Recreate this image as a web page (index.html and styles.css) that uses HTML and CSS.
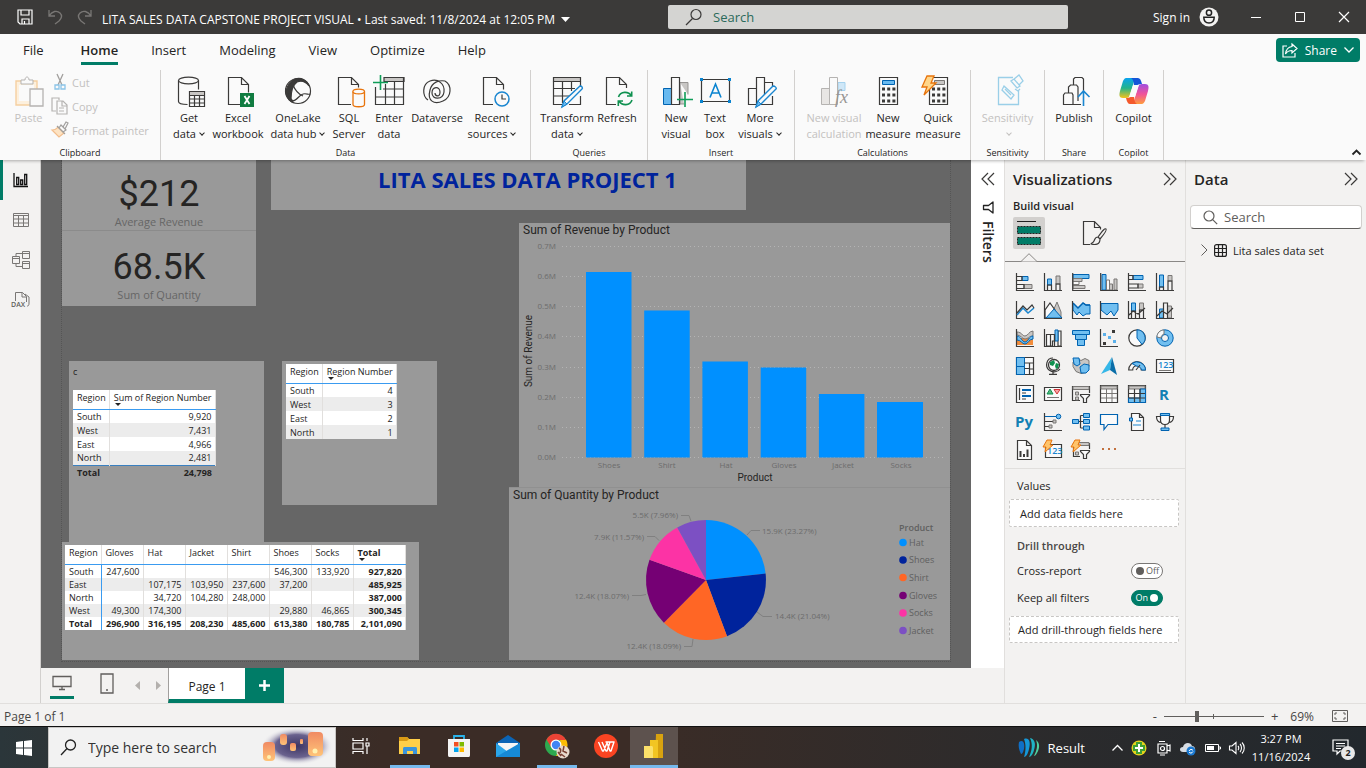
FILE: index.html
```html
<!DOCTYPE html>
<html lang="en">
<head>
<meta charset="utf-8">
<title>LITA SALES DATA CAPSTONE PROJECT VISUAL</title>
<link rel="stylesheet" href="styles.css">
</head>
<body>
<header class="titlebar">
  <div class="title-left">
    <button class="bare" aria-label="Save"><svg width="16" height="16" viewBox="0 0 16 16" fill="none" stroke="#fff" stroke-width="1.2"><path d="M1 1h14v14H3l-2-2zM4 1v5h8V1M5 15v-5h7v5M7.500 12v3"/></svg></button>
    <button class="bare" aria-label="Undo"><svg width="16" height="16" viewBox="0 0 16 16" fill="none" stroke="#797775" stroke-width="1.3"><path d="M2 1v6h6M2 7c3-5 8-6 11-3s1 6-1 8l-4 3"/></svg></button>
    <button class="bare" aria-label="Redo"><svg width="16" height="16" viewBox="0 0 16 16" fill="none" stroke="#797775" stroke-width="1.3"><path d="M14 1v6H8M14 7C11 2 6 1 3 4s-1 6 1 8l4 3"/></svg></button>
    <button class="doc-title">LITA SALES DATA CAPSTONE PROJECT VISUAL • Last saved: 11/8/2024 at 12:05 PM <svg width="9" height="5" viewBox="0 0 9 5"><path d="M0 0h9L4.500 5z" fill="#fff"/></svg></button>
  </div>
  <label class="title-search"><svg width="18" height="18" viewBox="0 0 18 18" fill="none" stroke="#3b3a39" stroke-width="1.2"><circle cx="11" cy="6.500" r="5"/><path d="M7.500 10.500L1 17"/></svg><input type="search" placeholder="Search" aria-label="Search"></label>
  <div class="title-right">
    <button class="signin">Sign in <svg width="20" height="20" viewBox="0 0 20 20"><circle cx="10" cy="10" r="9.500" fill="#f3f2f1"/><g fill="none" stroke="#222" stroke-width="1.500"><circle cx="10" cy="5.700" r="2.600"/><path d="M4.800 10.300h10.400c0 3.800-2 5.700-5.200 5.700s-5.200-1.900-5.200-5.700z"/></g></svg></button>
    <button class="win" aria-label="Minimize"><svg width="10" height="10"><path d="M0 5.500h10" stroke="#fff"/></svg></button>
    <button class="win" aria-label="Maximize"><svg width="10" height="10"><path d="M.5.5h9v9h-9z" fill="none" stroke="#fff"/></svg></button>
    <button class="win" aria-label="Close"><svg width="12" height="12"><path d="M1 1l10 10M11 1L1 11" stroke="#fff" stroke-width="1.200"/></svg></button>
  </div>
</header>

<nav class="tabs">
  <button class="tab file">File</button><button class="tab active">Home</button><button class="tab">Insert</button><button class="tab">Modeling</button><button class="tab">View</button><button class="tab">Optimize</button><button class="tab">Help</button>
  <button class="share"><svg width="16" height="15" viewBox="0 0 16 15" fill="none" stroke="#fff" stroke-width="1.200"><path d="M5 3H1v11h12v-4"/><path d="M10 1l5 4.500L10 10V7.500C7 7.500 5 8.500 3.500 11 4 6.500 6 4 10 3.500z"/></svg>Share<svg width="10" height="6" viewBox="0 0 10 6" fill="none" stroke="#fff" stroke-width="1.300"><path d="M.5.5L5 5 9.500.5"/></svg></button>
</nav>

<section class="ribbon">
  <div class="group clip">
    <div class="tools disabled">
      <button class="tool"><svg class="ic" viewBox="0 0 32 32" fill="none"><path d="M3 5h21v24H3z" fill="#fdf0dd" stroke="#f5cfa0" stroke-width="1.400"/><path d="M6 9h15v16H6z" fill="#fafafa"/><path d="M8 8V4h4c0-4 4-4 4 0h4v4z" fill="#fafafa" stroke="#b5b3b1"/><path d="M17 13h13v17H17z" fill="#fafafa" stroke="#b5b3b1" stroke-width="1.300"/></svg><span>Paste</span></button>
      <div class="stack">
        <button class="mini"><svg width="18" height="18" viewBox="0 0 18 18" fill="none"><path d="M6 1l5 11M12 1L7 12" stroke="#a19f9d" stroke-width="1.300"/><path d="M4 12h4v4H4zM10 12h4v4h-4z" stroke="#8bc4e8" stroke-width="1.300"/></svg>Cut</button>
        <button class="mini"><svg width="18" height="18" viewBox="0 0 18 18" fill="none" stroke="#b5b3b1" stroke-width="1.200"><path d="M5 14H1V1h7v2M6 4h6l4 4v9H6zM11 4v5h5M8 11h5M8 14h5"/></svg>Copy</button>
        <button class="mini"><svg width="18" height="18" viewBox="0 0 18 18" fill="none" stroke-width="1.200"><path d="M1 9c4 0 5-2 6-3l6 6-5 4z" fill="#fde3c3" stroke="#f2bd8c"/><path d="M6 5l8 8M8 7l2-3 5 5-3 2M12 6l3-5 2 1-3 6" stroke="#a19f9d"/></svg>Format painter</button>
      </div>
    </div>
    <div class="gname">Clipboard</div>
  </div>
  <div class="group data">
    <div class="tools">
      <button class="tool"><svg class="ic k" viewBox="0 0 32 32"><ellipse cx="15.500" cy="4.500" rx="10" ry="3.300"/><path d="M5.500 4.500v21c0 2 4 3 9 3M25.500 4.500v9"/><path d="M16.500 15.500h15v15h-15z" class="w"/><path d="M17 16h14v3H17z" fill="#c8c6c4" stroke="none"/><path d="M16.500 19.500h15M16.500 23h15M16.500 27h15M21.500 19v11M26.500 19v11"/></svg><span>Get<br>data<i class="cv"></i></span></button>
      <button class="tool"><svg class="ic" viewBox="0 0 32 32"><path class="k" d="M18 28.500H6.500v-27h13l7 7v8M19.500 1.500v7h7"/><path d="M18 17h14v14H18z" fill="#107c41"/><path d="M22.500 20l5 8M27.500 20l-5 8" stroke="#fff" stroke-width="1.800"/></svg><span>Excel<br>workbook</span></button>
      <button class="tool"><svg class="ic k" viewBox="0 0 32 32"><circle cx="16" cy="15" r="12.500"/><path d="M13 3c-4 2-8 6-8 11 0 4 1 7 4 9 0-8 2-14 6-17 5-2 9 0 12 4-2-6-8-9-14-7z" fill="#3b3a39"/><path d="M4 12c-1 5 1 11 6 14 2-1 0-2-1-3-3-3-4-6-5-11z" fill="#3b3a39"/><path d="M11 9c2 5 5 9 10 11M10 25c5 0 7-6 11-7 3-1 6 1 7 0"/></svg><span>OneLake<br>data hub<i class="cv"></i></span></button>
      <button class="tool"><svg class="ic" viewBox="0 0 32 32"><path class="k" d="M18 28.500H5.500v-27h13l7 7v3M18.500 1.500v7h7"/><g fill="#fafafa" stroke="#e8740c" stroke-width="1.300"><path d="M20 15.500v13c0 3 11.500 3 11.500 0v-13"/><ellipse cx="25.700" cy="15.500" rx="5.800" ry="2.400"/></g></svg><span>SQL<br>Server</span></button>
      <button class="tool"><svg class="ic k" viewBox="0 0 32 32"><path d="M11 1.500h20v4H11z" fill="#c8c6c4"/><path d="M2.500 11v17.500h28V1.500M11 1.500h20M12 5.500h19M10 13h21M2.500 21h28M12.500 8v20M21.500 6v22"/><path d="M7.500-1v15M0 6.500h15" stroke="#0f9d58" stroke-width="1.600"/></svg><span>Enter<br>data</span></button>
      <button class="tool"><svg class="ic k" viewBox="0 0 32 32"><path d="M7 24C1 20 1 8 9 5s15 3 14 11-12 8-12 1 8-7 8-1-5 4-5 1"/><path d="M24 5c7 4 7 16-2 20S6 25 9 14C11 6 18 4 24 5"/></svg><span>Dataverse</span></button>
      <button class="tool"><svg class="ic" viewBox="0 0 32 32"><path class="k" d="M17 28.500H7.500v-27h13l7 7v5M20.500 1.500v7h7"/><circle cx="26" cy="23" r="7" fill="#fafafa" stroke="#1a86d0" stroke-width="1.500"/><path class="k" d="M26 18.500V23h4"/></svg><span>Recent<br>sources<i class="cv"></i></span></button>
    </div>
    <div class="gname">Data</div>
  </div>
  <div class="group queries">
    <div class="tools">
      <button class="tool"><svg class="ic" viewBox="0 0 32 32"><g class="k"><path d="M2.500 1.500h27v4h-27z" fill="#c8c6c4"/><path d="M2.500 5.500v23H11M29.500 5.500V10M29.500 20v8.500H18M2.500 12.500H24M2.500 20H18M11.500 6v21M20.500 6v9"/></g><path d="M29 10c2 0 3 2 2 3L16 28l-5 3 2-6z" fill="#fafafa" stroke="#1a86d0" stroke-width="1.400"/><path d="M13 25l3 3-5 3z" fill="#69baf0" stroke="#1a86d0"/></svg><span>Transform<br>data<i class="cv"></i></span></button>
      <button class="tool"><svg class="ic" viewBox="0 0 32 32"><path class="k" d="M15 28.500H5.500v-27h13l7 7V12M18.500 1.500v7h7"/><path d="M17.500 21c2-6 10-6 13-1M30.700 15.500V20H26M31 24c-2 6-10 6-13 1M17.300 30v-5H22" fill="none" stroke="#0f9150" stroke-width="1.600"/></svg><span>Refresh</span></button>
    </div>
    <div class="gname">Queries</div>
  </div>
  <div class="group insert">
    <div class="tools">
      <button class="tool"><svg class="ic" viewBox="0 0 32 32"><path d="M20 6.500h8v12M20 6.500V28h4" fill="#c8c6c4" stroke="#979593"/><path d="M3.500 12.500h8v16h-8z" fill="#69baf0" stroke="#0063b1"/><path class="k w" d="M11.500 1.500h8v27h-8z"/><path d="M25 16v15M17 23.500h16" stroke="#0f9d58" stroke-width="1.600"/></svg><span>New<br>visual</span></button>
      <button class="tool"><svg class="ic" viewBox="0 0 32 32"><path class="k" d="M2.500 3.500h28v22h-28z"/><g fill="#0a84d0"><path d="M1 2h3v3H1zM29 2h3v3h-3zM1 24h3v3H1zM29 24h3v3h-3z"/></g><path d="M11 21.500L16.500 8 22 21.500M13 17h7" fill="none" stroke="#0a84d0" stroke-width="1.600"/></svg><span>Text<br>box</span></button>
      <button class="tool"><svg class="ic" viewBox="0 0 32 32"><path class="k" d="M12 28.500H4.500v-16h8M12.500 28V1.500h8V20M20.500 6.500h8V10M28.500 20v8.500H17"/><path d="M29 10c2 0 4 2 3 3L17 28l-5 3 2-6z" fill="#fafafa" stroke="#1a86d0" stroke-width="1.400"/><path d="M14 25l3 3-5 3z" fill="#69baf0" stroke="#1a86d0"/></svg><span>More<br>visuals<i class="cv"></i></span></button>
    </div>
    <div class="gname">Insert</div>
  </div>
  <div class="group calc">
    <div class="tools">
      <button class="tool off"><svg class="ic" viewBox="0 0 32 32" fill="#fafafa" stroke="#b5b3b1"><path d="M3.500 12.500h8v16h-8z" fill="#e8e6e4"/><path d="M20 6.500h7v8h-7z" fill="#cfe7f7" stroke="#a5d2ee"/><path d="M11.500 1.500h8v27h-8z"/><text x="17" y="27" class="fx">fx</text></svg><span>New visual<br>calculation</span></button>
      <button class="tool"><svg class="ic" viewBox="0 0 32 32"><path class="k w" d="M7.500 1.500h18v27h-18z"/><path d="M10.500 4.500h12v4h-12z" fill="#69baf0" stroke="#0063b1"/><path d="M10 13h14M10 19h14M10 25h14" stroke="#3b3a39" stroke-width="3" stroke-dasharray="3 2.200"/></svg><span>New<br>measure</span></button>
      <button class="tool"><svg class="ic" viewBox="0 0 32 32"><path class="k w" d="M7.500 1.500h18v27h-18z"/><path d="M12.500 4.500h10v4h-10z" fill="#c8c6c4" stroke="#797775"/><path d="M10 13h14M10 19h14M10 25h14" stroke="#3b3a39" stroke-width="3" stroke-dasharray="3 2.200"/><path d="M5 0h7L9 7h5L2 19l3-8H0z" fill="#ffd68a" stroke="#e8740c" stroke-width="1.300"/></svg><span>Quick<br>measure</span></button>
    </div>
    <div class="gname">Calculations</div>
  </div>
  <div class="group one sens">
    <div class="tools"><button class="tool off"><svg class="ic" viewBox="0 0 32 32" fill="none" stroke="#9acfe8" stroke-width="1.300"><path d="M21 1.500H6.500v27h20V15"/><path d="M12 10l10 9-3 4-9-9zM13 13l6 6M19 5l6 7 3-2-6-7zM22 3l5-4 4 6-4 4M23 13l3 2 2-2"/></svg><span>Sensitivity<br><i class="cv"></i></span></button></div>
    <div class="gname">Sensitivity</div>
  </div>
  <div class="group one shr">
    <div class="tools"><button class="tool"><svg class="ic k" viewBox="0 0 32 32"><path d="M23 28.500H5.500V19l1.500-2h7l1 2v9.500M10.500 17v-6l2-2h6l1.500 2v14M15.500 9V3L17 1.500h7L25.500 3v12"/><path d="M25.500 30V15M20 21l5.500-6 6 6" stroke="#1a86d0" stroke-width="1.600"/></svg><span>Publish</span></button></div>
    <div class="gname">Share</div>
  </div>
  <div class="group one cop">
    <div class="tools"><button class="tool"><svg class="ic" viewBox="0 0 32 32"><defs><linearGradient id="ca" x1="0" y1="0" x2="0" y2="1"><stop offset="0" stop-color="#0aa2ef"/><stop offset=".5" stop-color="#22b48c"/><stop offset="1" stop-color="#f5c21a"/></linearGradient><linearGradient id="cb" x1="0" y1="1" x2="0" y2="0"><stop offset="0" stop-color="#ff9d3c"/><stop offset=".5" stop-color="#f0529a"/><stop offset="1" stop-color="#a04fe0"/></linearGradient></defs><path d="M8 2h12c-3 1-4 3-5 7l-3 10c-1 3-3 3-5 3H5c-4 0-4-3-3-7L5 5c1-2 2-3 3-3z" fill="url(#ca)"/><path d="M24 28H12c3-1 4-3 5-7l3-10c1-3 3-3 5-3h2c4 0 4 3 3 7l-3 10c-1 2-2 3-3 3z" fill="url(#cb)"/><path d="M13 2h7c2 0 3 2 4 6-4 0-5 1-6 3l-2 1c0-4 0-8-3-10z" fill="#1456d8"/><path d="M19 28h-7c-2 0-3-2-4-6 4 0 5-1 6-3l2-1c0 4 0 8 3 10z" fill="#f4592c"/><path d="M15 9h6l-4 12h-6z" fill="#fafafa"/></svg><span>Copilot</span></button></div>
    <div class="gname">Copilot</div>
  </div>
  <button class="bare collapse" aria-label="Collapse ribbon"><svg width="9" height="6" viewBox="0 0 9 6" fill="none" stroke="#222" stroke-width="1.800"><path d="M.5 5.500L4.500 1.500l4 4"/></svg></button>
</section>

<main class="work">
  <nav class="rail">
    <button class="rbtn on" aria-label="Report view"><svg width="18" height="18" viewBox="0 0 18 18" fill="none" stroke="#111" stroke-width="1.300"><path d="M2 2v13.500h14M4.700 6.500h2v7h-2zM8.700 9h2v4.500h-2zM12.700 3.500h2v10h-2z"/></svg></button>
    <button class="rbtn" aria-label="Table view"><svg width="18" height="18" viewBox="0 0 18 18" fill="none" stroke="#797775"><path d="M1.500 2.500h15v13h-15zM1.500 4.500h15M1.500 8h15M1.500 12h15M6.500 4.500v11M11.500 4.500v11"/></svg></button>
    <button class="rbtn" aria-label="Model view"><svg width="20" height="20" viewBox="0 0 20 20" fill="none" stroke="#797775"><path d="M1.500 6.500h7v7h-7zM1.500 8.500h7M11.500 1.500h7v7h-7zM11.500 3.500h7M11.500 11.500h7v7h-7zM11.500 13.500h7M5 6.500V3.500h6M5 13.500v3h6"/></svg></button>
    <button class="rbtn" aria-label="DAX query view"><svg width="20" height="20" viewBox="0 0 20 20" fill="none" stroke="#797775"><path d="M4.500 11V2.500h7l4 4V12M11 2.500V7h4.500M14 4l4 3v6c0 3-1 3-2 3"/><text x="0" y="17" class="dax">DAX</text></svg></button>
  </nav>

  <div class="center">
    <div class="stage">
      <section class="canvas">
        <div class="page">
          <article class="visual kpis">
            <div class="kpi"><strong>$212</strong><span>Average Revenue</span></div>
            <div class="kpi"><strong>68.5K</strong><span>Sum of Quantity</span></div>
          </article>
          <article class="visual banner"><h1>LITA SALES DATA PROJECT 1</h1></article>
          <article class="visual t1">
            <p>c</p>
            <table class="grid">
              <thead><tr><th>Region</th><th class="sorted">Sum of Region Number</th></tr></thead>
              <tbody><tr><td>South</td><td>9,920</td></tr><tr><td>West</td><td>7,431</td></tr><tr><td>East</td><td>4,966</td></tr><tr><td>North</td><td>2,481</td></tr></tbody>
              <tfoot><tr><td>Total</td><td>24,798</td></tr></tfoot>
            </table>
          </article>
          <article class="visual t2">
            <table class="grid">
              <thead><tr><th>Region</th><th class="sorted">Region Number</th></tr></thead>
              <tbody><tr><td>South</td><td>4</td></tr><tr><td>West</td><td>3</td></tr><tr><td>East</td><td>2</td></tr><tr><td>North</td><td>1</td></tr></tbody>
            </table>
          </article>
          <article class="visual t3">
            <table class="grid matrix">
              <colgroup><col class="c0"><col span="6" class="c1"><col></colgroup>
              <thead><tr><th>Region</th><th>Gloves</th><th>Hat</th><th>Jacket</th><th>Shirt</th><th>Shoes</th><th>Socks</th><th class="sorted">Total</th></tr></thead>
              <tbody>
              <tr><td>South</td><td>247,600</td><td></td><td></td><td></td><td>546,300</td><td>133,920</td><td>927,820</td></tr>
              <tr><td>East</td><td></td><td>107,175</td><td>103,950</td><td>237,600</td><td>37,200</td><td></td><td>485,925</td></tr>
              <tr><td>North</td><td></td><td>34,720</td><td>104,280</td><td>248,000</td><td></td><td></td><td>387,000</td></tr>
              <tr><td>West</td><td>49,300</td><td>174,300</td><td></td><td></td><td>29,880</td><td>46,865</td><td>300,345</td></tr>
              <tr class="sum"><td>Total</td><td>296,900</td><td>316,195</td><td>208,230</td><td>485,600</td><td>613,380</td><td>180,785</td><td>2,101,090</td></tr>
              </tbody>
            </table>
          </article>
          <article class="visual bars">
            <h2>Sum of Revenue by Product</h2>
            <svg viewBox="0 0 431 248" width="431" height="248">
              <path d="M43 7.500h384M43 37.500h384M43 67.500h384M43 97.500h384M43 128.500h384M43 158.500h384M43 188.500h384M43 218.500h384" stroke="#b4b4b4" stroke-dasharray="1 3"/>
              <g fill="#0090ff"><path d="M67 33h45.500v185.500H67zM125.200 71.500h45.500v147h-45.500zM183.400 122.500h45.500v96h-45.500zM241.700 128.500h45.500v90h-45.500zM299.900 155h45.500v63.500h-45.500zM358 163h46v55.500h-46z"/></g>
              <g class="ax" text-anchor="end"><text x="37" y="10">0.7M</text><text x="37" y="40">0.6M</text><text x="37" y="70">0.5M</text><text x="37" y="100">0.4M</text><text x="37" y="131">0.3M</text><text x="37" y="161">0.2M</text><text x="37" y="191">0.1M</text><text x="37" y="221">0.0M</text></g>
              <g class="ax" text-anchor="middle"><text x="90" y="229">Shoes</text><text x="148" y="229">Shirt</text><text x="207" y="229">Hat</text><text x="265" y="229">Gloves</text><text x="324" y="229">Jacket</text><text x="382" y="229">Socks</text></g>
              <g class="axt" text-anchor="middle"><text x="236" y="242">Product</text><text transform="rotate(-90 13 112)" x="13" y="112">Sum of Revenue</text></g>
            </svg>
          </article>
          <article class="visual pie">
            <h2>Sum of Quantity by Product</h2>
            <svg viewBox="0 0 441 157" width="441" height="157">
              <path d="M197 77V17A60 60 0 0 1 256.600 70.500z" fill="#0090ff"/>
              <path d="M197 77L256.600 70.500A60 60 0 0 1 218 133.200z" fill="#00239c"/>
              <path d="M197 77L218 133.200A60 60 0 0 1 154.900 119.700z" fill="#ff6625"/>
              <path d="M197 77L154.900 119.700A60 60 0 0 1 140.500 56.800z" fill="#750074"/>
              <path d="M197 77L140.500 56.800A60 60 0 0 1 168.200 24.400z" fill="#fc33a5"/>
              <path d="M197 77L168.200 24.400A60 60 0 0 1 197 17z" fill="#7c50c3"/>
              <path d="M238 32l4-4.500h9M248 109l6 4.500h9M184 136l-1 7.500h-8M123 92.500h9l5-1M138 33.500h8l4 4M172 12.500h8l2 5.500" fill="none" stroke="#808080"/>
              <g class="ax"><text x="253" y="31">15.9K (23.27%)</text><text x="266" y="116">14.4K (21.04%)</text></g>
              <g class="ax" text-anchor="end"><text x="172" y="146">12.4K (18.09%)</text><text x="120" y="96">12.4K (18.07%)</text><text x="135" y="37">7.9K (11.57%)</text><text x="169" y="15">5.5K (7.96%)</text></g>
              <g class="leg"><text x="390" y="28" class="lt">Product</text><text x="400" y="43">Hat</text><text x="400" y="60">Shoes</text><text x="400" y="78">Shirt</text><text x="400" y="96">Gloves</text><text x="400" y="113">Socks</text><text x="400" y="131">Jacket</text></g>
              <circle cx="394" cy="39.500" r="3.800" fill="#0090ff"/><circle cx="394" cy="57" r="3.800" fill="#00239c"/><circle cx="394" cy="74.500" r="3.800" fill="#ff6625"/><circle cx="394" cy="92.500" r="3.800" fill="#750074"/><circle cx="394" cy="110" r="3.800" fill="#fc33a5"/><circle cx="394" cy="127.500" r="3.800" fill="#7c50c3"/>
            </svg>
          </article>
        </div>
      </section>
      <aside class="filters">
        <button class="bare" aria-label="Expand filters"><svg width="14" height="14" viewBox="0 0 14 14" fill="none" stroke="#3b3a39" stroke-width="1.200"><path d="M7 1L1 7l6 6M13 1L7 7l6 6"/></svg></button>
        <svg width="12" height="14" viewBox="0 0 12 14" fill="none" stroke="#222" stroke-width="1.300" stroke-linejoin="round"><path d="M11 1v11L6.500 8.500H1.500v-4h5z"/></svg>
        <h2>Filters</h2>
      </aside>
    </div>
    <div class="pagebar">
      <button class="device on" aria-label="Desktop layout"><svg width="20" height="17" viewBox="0 0 20 17" fill="none" stroke="#605e5c" stroke-width="1.300"><path d="M1 1.500h18v10H1zM7 14.500h6M10 12v2"/></svg></button>
      <button class="device" aria-label="Mobile layout"><svg width="14" height="21" viewBox="0 0 14 21" fill="none" stroke="#605e5c" stroke-width="1.300"><path d="M1 1h12v19H1zM6 17h2"/></svg></button>
      <button class="bare arrow" aria-label="Previous page"><svg width="5" height="9"><path d="M5 0v9L0 4.500z" fill="#b3b0ad"/></svg></button>
      <button class="bare arrow" aria-label="Next page"><svg width="5" height="9"><path d="M0 0v9l5-4.500z" fill="#b3b0ad"/></svg></button>
      <button class="ptab">Page 1</button>
      <button class="plus" aria-label="New page"><svg width="11" height="11"><path d="M5.500 0v11M0 5.500h11" stroke="#fff" stroke-width="2.500"/></svg></button>
    </div>
  </div>

  <aside class="viz">
    <div class="phead"><h2>Visualizations</h2><button class="bare" aria-label="Collapse"><svg width="14" height="14" viewBox="0 0 14 14" fill="none" stroke="#3b3a39" stroke-width="1.200"><path d="M1 1l6 6-6 6M7 1l6 6-6 6"/></svg></button></div>
    <h3>Build visual</h3>
    <div class="modes">
      <button class="mode on" aria-label="Build visual"><svg width="26" height="26" viewBox="0 0 26 26"><path d="M1 1.500h19" stroke="#222"/><path d="M1.500 6.500h23v7h-23zM1.500 17.500h23v7h-23z" fill="#007c67" stroke="#222" stroke-dasharray="2 1"/></svg></button>
      <button class="mode" aria-label="Format visual"><svg width="26" height="26" viewBox="0 0 26 26" fill="none" stroke="#3b3a39" stroke-width="1.200"><path d="M8 24.500H1.500v-23h11l6 6v2M12.500 1.500v6h6"/><path d="M24 9c1 1 0 3-6 10l-2-2c5-7 7-9 8-8zM16 17c-3 0-3 2-4 4-1 2-3 2-3 3 4 1 9 1 9-5z"/></svg></button>
    </div>
    <svg class="caret" width="18" height="9" viewBox="0 0 18 9"><path d="M0 8.500h1L9 .7l8 7.800h1" fill="#f3f2f1" stroke="#8a8886"/></svg>
    <div class="gallery">
      <svg viewBox="0 0 18 18"><path class="b" d="M6 3.500h6v4H6z"/><path class="g" d="M8 11.500h8v4H8z"/><path class="k" d="M.5 0v17.500H18M1 3.500h5v4H1M1 11.500h7v4H1"/></svg>
      <svg viewBox="0 0 18 18"><path class="b" d="M3.500 6h4v6h-4z"/><path class="g" d="M12 3h4v8h-4z"/><path class="k" d="M.5 0v17.500H18M3.500 17v-5h4v5M12 17v-6h4v6"/></svg>
      <svg viewBox="0 0 18 18"><path class="b" d="M1 1.500h16v4H1z"/><path class="g" d="M1 5.500h9v3H1zM1 12.500h12v3H1z"/><path class="g w2" d="M1 8.500h6v3H1z"/><path class="k" d="M.7 0v17.500H18"/></svg>
      <svg viewBox="0 0 18 18"><path class="b" d="M2 1.500h4V17H2z"/><path class="g w2" d="M6.500 7h3v10h-3z"/><path class="g" d="M9.500 11h3v6h-3zM14 6h3v11h-3z"/><path class="k" d="M.7 0v17.500H18"/></svg>
      <svg viewBox="0 0 18 18"><path class="b" d="M5 2.500h10v4H5z"/><path class="g" d="M10 11h5v4h-5z"/><path class="k" d="M.5 0v17.500H18M1 2.500h4v4H1M1 11h9v4H1"/></svg>
      <svg viewBox="0 0 18 18"><path class="b" d="M3.500 2h4v12h-4z"/><path class="g" d="M12 2.500h4V8h-4z"/><path class="k" d="M.5 0v17.500H18M3.500 17v-3h4v3M12 17V8h4v9"/></svg>

      <svg viewBox="0 0 18 18"><path class="k" d="M.5 0v17.500H18"/><path d="M1 14l6-7 5 5 6-5" fill="none" stroke="#1a86d0" stroke-width="1.500"/><path class="k" d="M1 12l6-7 4 4 5-5 2 3"/></svg>
      <svg viewBox="0 0 18 18"><path class="g" d="M6 17l7-16 4 10v6z"/><path class="k w" d="M1 17V9l5-7 5 7-5 8z"/><path class="b" d="M2 17l8-9 8 9z"/><path class="k" d="M.5 0v17.500H18"/></svg>
      <svg viewBox="0 0 18 18"><path class="b" d="M1 2l5 5 5-5 3 2h4v9h-4l-3 2-4-4-2 3-4-5z"/><path d="M1 2l5 5 5-5 3 2h4" fill="none" stroke="#0063b1" stroke-width="1.500"/><path class="k" d="M.5 0v17.500H18"/></svg>
      <svg viewBox="0 0 18 18"><path class="b" d="M1 2.500h17V9l-4 6-3-5-4 4-6-5z"/><path class="k" d="M.5 0v17.500H18"/></svg>
      <svg viewBox="0 0 18 18"><path class="b" d="M3.500 2h4v8h-4z"/><path class="g" d="M11.500 2h4v7h-4z"/><path class="k" d="M.5 0v17.500H18M3.500 17v-7h4v7M11.500 17V9h4v8M1 14l4-4 5 3 7-6"/></svg>
      <svg viewBox="0 0 18 18"><path class="b" d="M3.500 8h4v9h-4z"/><path class="g" d="M11.500 5h4v12h-4z"/><path class="k" d="M.5 0v17.500H18M7.500 17V2h4v15M1 15l5-5 5 3 6-6"/></svg>

      <svg viewBox="0 0 18 18"><path d="M1 9h16v7H1z" fill="#f28c3a"/><path class="g" d="M1 3c5 0 5 4 8 4s4-5 8-5v5c-4 0-5 3-8 3s-4-4-8-4z"/><path class="b" d="M1 7c4 0 5 6 8 6s4-6 8-6v3c-4 0-5 5-8 5s-4-4-8-4z"/><path class="k" d="M.5 0v17.500H18"/></svg>
      <svg viewBox="0 0 18 18"><path class="k w" d="M2.500 5.500h4V17h-4zM6.500 5.500h4V12h-2v5h-2zM14 2h3v15h-3z"/><path class="b" d="M11 1h3v11h-3z"/><path class="k" d="M.5 0v17.500H18M10.500 5v12"/></svg>
      <svg viewBox="0 0 18 18"><path class="b" d="M.5 1.500h17v4H.5zM3.500 5.500h11v5h-11zM5.500 10.500h7v6h-7z"/></svg>
      <svg viewBox="0 0 18 18"><path d="M3 13h3v3H3zM12 1h3v3h-3z" fill="#3b3a39"/><path d="M3 4h3v3H3zM8 7h3v3H8zM13 11h3v3h-3z" fill="#5bb0ea"/><path class="k" d="M.5 0v17.500H18"/></svg>
      <svg viewBox="0 0 18 18"><circle cx="9" cy="9" r="8.200" class="k w"/><path class="b" d="M9 .8a8.200 8.200 0 0 1 5 14.600L9 9z"/></svg>
      <svg viewBox="0 0 18 18"><path class="b" fill-rule="evenodd" d="M9 .8a8.200 8.200 0 1 1 0 16.400A8.200 8.200 0 0 1 9 .8zm0 4.700a3.500 3.500 0 1 0 0 7 3.500 3.500 0 0 0 0-7z"/><path class="g w2" d="M1 8C1 4 4 1 8 1v4C6 6 5 7 5 9z"/></svg>

      <svg viewBox="0 0 18 18"><path class="k w" d="M.5.500h17v17H.5z"/><path class="b" d="M.5.500h8v9h-8zM.5 9.500h8v8h-8z"/><path class="k" d="M8.500 6h9M8.500 11.500h5v6M13.500 6v6h4"/></svg>
      <svg viewBox="0 0 18 18"><circle cx="10" cy="8" r="5.500" fill="#fafafa" stroke="#3b3a39" stroke-width="1.300"/><path d="M6 5l4-2 1 3-2 3-3-1zM12 6l3 1-1 4-2 1-1-3z" fill="#0f9150"/><path class="k" d="M9 1C2 1 1 10 5 13s9 2 11-1M9 15v2M5 17.300h8"/></svg>
      <svg viewBox="0 0 18 18"><path class="g" d="M5 1.500l4 2 4-2 4 2v6l-2 1-1 5-5 1-5-2-3-5V5z"/><path class="b" d="M1 1h6l1 6-3 2-3-2zM8 10l4-3 5 1v5l-3 3H9z"/></svg>
      <svg viewBox="0 0 18 18"><path d="M12 0L1 17l9-4z" fill="#35b7e8"/><path d="M12 0l-2 13 7 5z" fill="#0a6ea8"/></svg>
      <svg viewBox="0 0 18 18"><path class="k w" d="M.7 13A8.300 8.300 0 0 1 17.300 13h-4A4.300 4.300 0 0 0 4.700 13z"/><path class="b" d="M4 6.500a8.500 8.500 0 0 1 13.500 6.500h-4c0-2-3-4-5-4z"/><path class="k" d="M8 13l4-5"/></svg>
      <svg viewBox="0 0 18 18"><path class="k w" d="M.5 2.500h17v13H.5z"/><text x="2" y="11" class="n">123</text><path class="g" d="M3 13.500h12"/></svg>

      <svg viewBox="0 0 18 18"><path class="k w" d="M.5.500h17v17H.5z"/><path class="k" d="M3.500 3v12M6 8h4M6 14h4"/><path d="M6 5h9M6 11h9" stroke="#0063b1" stroke-width="2"/></svg>
      <svg viewBox="0 0 18 18"><path class="k w" d="M.5 2.500h17v13H.5z"/><path d="M3 9l3-5 3 5z" fill="#57b87f" stroke="#0f9150"/><path d="M10 4.500h6L13 9z" fill="#f7a5a5" stroke="#d13438"/><path class="g" d="M3 12.500h12"/></svg>
      <svg viewBox="0 0 18 18"><path class="k" d="M8 15.500H.5V1.500h17V8"/><path class="g" d="M1 1.500h16v3H1zM3.500 7h3v3h-3zM3.500 12h3v3h-3z"/><path class="k w" d="M8.500 9.500h9v1l-3 3v4h-3v-4l-3-3z"/></svg>
      <svg viewBox="0 0 18 18"><path class="k w" d="M.5.500h17v17H.5z"/><path class="g" d="M1 1h16v3H1z"/><path class="g" d="M1 8.500h16M1 13h16M6.500 4v13M12 4v13"/></svg>
      <svg viewBox="0 0 18 18"><path class="k w" d="M.5.500h17v17H.5z"/><path class="g" d="M1 1h16v3H1z"/><path class="b" d="M12 4h5.500v13.500H.5V13H12z"/><path class="k" d="M1 8.500h16M1 13h16M6.500 4v13M12 4v13"/></svg>
      <svg viewBox="0 0 18 18"><text x="3" y="15" class="rp">R</text></svg>

      <svg viewBox="0 0 18 18"><text x="-1" y="14" class="rp">Py</text></svg>
      <svg viewBox="0 0 18 18"><path class="k" d="M.5 0v17.500H18M1 8.500h8M1 13.500h5"/><path d="M1 3.500h13" stroke="#0063b1"/><circle cx="14.500" cy="3.500" r="2.300" class="b"/><path class="g" d="M9 7h3v3H9zM5 12h3v3H5z"/></svg>
      <svg viewBox="0 0 18 18"><path class="k" d="M6 8.500h5M8.500 2.500h3M8.500 15h3M8.500 2.500V15"/><path class="b" d="M.5 6.500h6v4h-6zM11.500.500h6v4h-6zM11.500 6.500h6v4h-6zM11.500 13h6v4h-6z"/></svg>
      <svg viewBox="0 0 18 18"><path d="M.5 1.500h17v10H8l-4 5v-5H.5z" fill="#fafafa" stroke="#0063b1" stroke-width="1.200"/></svg>
      <svg viewBox="0 0 18 18"><path class="k w" d="M3.500.500h8l4 4v13h-12zM11.500.500v4h4"/><path class="b" d="M1.500 5h3v3h-3z"/><path d="M8 8h5M5 12h8" stroke="#1a86d0"/></svg>
      <svg viewBox="0 0 18 18"><path class="k w" d="M4.500 3.500H.5c0 4 1 6 5 6M13.500 3.500h4c0 4-1 6-5 6M4.500 1v6c0 6 9 6 9 0V1z"/><path class="k" d="M9 11v4"/><path class="b" d="M4.500.500h9v2h-9zM5 15h8v2.500H5z"/></svg>

      <svg viewBox="0 0 18 18"><path class="k w" d="M1.500-.5h9l5 5v14h-14zM10.500-.5v5h5"/><path d="M3.500 10h2v6h-2zM7 13h2v3H7zM10.500 8.500h2V16h-2z" fill="#3b3a39"/></svg>
      <svg viewBox="0 0 18 18"><path class="k w" d="M1.500 3.500h16v13h-16z"/><text x="3" y="13" class="n">123</text><path d="M3-1h5L6 4h3L1 11l1-5h-3z" fill="#ffc46b" stroke="#e8740c"/></svg>
      <svg viewBox="0 0 18 18"><path class="k" d="M8 15.500H1.500v-13h16V8"/><path class="g" d="M6 1.500h11v3H6zM3.500 11h3v3h-3z"/><path class="k w" d="M8.500 9.500h9v1l-3 3v4h-3v-4l-3-3z"/><path d="M3-1h5L6 4h3L1 11l1-5h-3z" fill="#ffc46b" stroke="#e8740c"/></svg>
      <svg viewBox="0 0 18 18"><path d="M2 7h2v2H2zM8 7h2v2H8zM14 7h2v2h-2z" fill="#c2703d"/></svg>
    </div>
    <div class="wells">
      <h4 class="plain">Values</h4>
      <div class="drop">Add data fields here</div>
      <h4>Drill through</h4>
      <label class="sw">Cross-report<span class="tg"><input type="checkbox"><b>Off</b></span></label>
      <label class="sw">Keep all filters<span class="tg yes"><input type="checkbox" checked><b>On</b></span></label>
      <div class="drop low">Add drill-through fields here</div>
    </div>
  </aside>

  <aside class="fields">
    <div class="phead"><h2>Data</h2><button class="bare" aria-label="Collapse"><svg width="14" height="14" viewBox="0 0 14 14" fill="none" stroke="#3b3a39" stroke-width="1.200"><path d="M1 1l6 6-6 6M7 1l6 6-6 6"/></svg></button></div>
    <label class="fsearch"><svg width="15" height="15" viewBox="0 0 15 15" fill="none" stroke="#605e5c" stroke-width="1.200"><circle cx="6" cy="6" r="5"/><path d="M9.700 9.700l4.500 4.500"/></svg><input type="search" placeholder="Search" aria-label="Search fields"></label>
    <button class="set"><svg width="7" height="12" viewBox="0 0 7 12" fill="none" stroke="#605e5c"><path d="M.5.500L6 6 .5 11.500"/></svg><svg width="13" height="13" viewBox="0 0 13 13" fill="none" stroke="#222" stroke-width="1.200"><rect x=".6" y=".6" width="11.800" height="11.800" rx="2"/><path d="M4.500.500v12M8.500.500v12M.5 4.500h12M.5 8.500h12"/></svg>Lita sales data set</button>
  </aside>
</main>

<footer class="status">
  <span>Page 1 of 1</span>
  <div class="zoom"><button class="bare" aria-label="Zoom out">-</button><input type="range" min="0" max="100" value="32" aria-label="Zoom"><button class="bare" aria-label="Zoom in">+</button><span class="pct">69%</span><button class="bare" aria-label="Fit to page"><svg width="16" height="12" viewBox="0 0 16 12" fill="none" stroke="#605e5c"><path d="M.5.500h15v11H.5zM3 5V3h2M11 3h2v2M13 7v2h-2M5 9H3V7"/></svg></button></div>
</footer>

<footer class="taskbar">
  <button class="start" aria-label="Start"><svg width="16" height="16"><path d="M0 2l7-1v6.500H0zM8 1l8-1v7.500H8zM0 8.500h7V15l-7-1zM8 8.500h8V16l-8-1z" fill="#fff"/></svg></button>
  <label class="wsearch"><svg width="17" height="17" viewBox="0 0 17 17" fill="none" stroke="#222" stroke-width="1.300"><circle cx="10.500" cy="6" r="5"/><path d="M7 9.500L1 16"/></svg><input type="search" placeholder="Type here to search" aria-label="Type here to search">
    <svg width="72" height="38" viewBox="0 0 72 38"><defs><radialGradient id="sky"><stop offset="0" stop-color="#3d3563"/><stop offset=".6" stop-color="#6a628e"/><stop offset="1" stop-color="#f2f2f2" stop-opacity="0"/></radialGradient><linearGradient id="lamp" x1="0" y1="0" x2="0" y2="1"><stop offset="0" stop-color="#f08a63"/><stop offset="1" stop-color="#ffc478"/></linearGradient></defs><ellipse cx="36" cy="17" rx="36" ry="19" fill="url(#sky)"/><g fill="url(#lamp)"><rect x="2" y="13" width="12" height="19" rx="4"/><rect x="19" y="5" width="7" height="11" rx="3"/><rect x="29" y="14" width="6" height="8" rx="2"/><rect x="39" y="10" width="3" height="5" rx="1"/><rect x="47" y="3" width="15" height="24" rx="4"/></g><g fill="#fff1b0"><circle cx="8" cy="28" r="2"/><circle cx="54" cy="22" r="2.500"/></g></svg></label>
  <button class="app" aria-label="Task view"><svg width="18" height="16" viewBox="0 0 18 16" fill="none" stroke="#fff" stroke-width="1.200"><path d="M1 0v2.500h10V0M1 5h10v6H1zM1 16v-2.500h10V16M15 0v3M15 8v8M14 5h3v3h-3z"/></svg></button>
  <button class="app run" aria-label="File Explorer"><svg width="22" height="20" viewBox="0 0 22 20"><path d="M0 1h8l2 2h11v15H0z" fill="#ffcf48"/><path d="M0 1h8l2 2-2 2H0z" fill="#d99a15"/><path d="M4 18v-5c0-2 1-2 2-2h10c1 0 2 0 2 2v5h-4v-3H8v3z" fill="#3b94da"/></svg></button>
  <button class="app" aria-label="Store"><svg width="24" height="24" viewBox="0 0 24 24"><path d="M7 6V2h10v4" fill="none" stroke="#2bb3ea" stroke-width="1.800"/><path d="M1 5h22v16c0 2-1 2-2 2H3c-1 0-2 0-2-2z" fill="#f4f4f4"/><path d="M7 8h4.500v4.500H7z" fill="#f25022"/><path d="M12.500 8H17v4.500h-4.500z" fill="#7fba00"/><path d="M7 13.500h4.500V18H7z" fill="#00a4ef"/><path d="M12.500 13.500H17V18h-4.500z" fill="#ffb900"/></svg></button>
  <button class="app" aria-label="Mail"><svg width="24" height="24" viewBox="0 0 24 24"><path d="M0 9l12-8 12 8v14H0z" fill="#0b64b5"/><path d="M2 9h20v8H2z" fill="#f5f5f5"/><path d="M0 9l12 9L24 9v14H0z" fill="#2ba6ea"/><path d="M0 23L24 9v14z" fill="#1689d6"/></svg></button>
  <button class="app run" aria-label="Chrome"><svg width="26" height="26" viewBox="0 0 26 26"><circle cx="12" cy="12" r="11" fill="#2da94f"/><path d="M22 6.500A11 11 0 0 1 12 23l5-9-1-7.500z" fill="#fbbc04"/><path d="M2.500 6.500L7 14l3-7h12A11 11 0 0 0 2.500 6.500z" fill="#ea4335"/><circle cx="12" cy="12" r="5.500" fill="#fff"/><circle cx="12" cy="12" r="4.200" fill="#4285f4"/><circle cx="19" cy="19" r="6.500" fill="#e8d9cc"/><path d="M15 15c2 1 2 3 1 5M20 13l-1 5 4 2M17 21l4 3M14 19l3 4" stroke="#7a4234" fill="none" stroke-width="1.500"/></svg></button>
  <button class="app" aria-label="WPS Office"><svg width="24" height="24" viewBox="0 0 24 24"><circle cx="12" cy="12" r="12" fill="#fa4422"/><path d="M4.500 8l4 9h1l3.500-8 3 8h1l3-9h-8.500M8 8l4 9h1l3-9" fill="none" stroke="#fff" stroke-width="1.400" stroke-linejoin="round"/></svg></button>
  <button class="app run hot" aria-label="Power BI"><svg width="20" height="24" viewBox="0 0 20 24"><path d="M12 0h7v24h-8z" fill="#d8a20f"/><path d="M6 6h8v18H6z" fill="#f2c522"/><path d="M0 12h7c1 0 2 0 2 2v10H0z" fill="#fbe06a"/></svg></button>
  <div class="tray">
    <svg width="22" height="22" viewBox="0 0 22 22"><path d="M1 5c4-3 6 1 5 7-1 4-2 5-3 5C1 13 0 9 1 5z" fill="#0f6fc6"/><path d="M6 2c5-2 7 3 5 10-1 5-3 8-5 8 2-6 2-13 0-18z" fill="#1597d8"/><path d="M12 1c5 1 6 6 4 12-1 4-3 7-5 7 3-6 4-13 1-19z" fill="#1fb5c6"/><path d="M18 3c4 3 4 8 1 13-1 2-2 3-3 3 3-6 4-11 2-16z" fill="#4fcf9f"/></svg>
    <span class="res">Result</span>
    <svg width="11" height="7" viewBox="0 0 11 7" fill="none" stroke="#fff" stroke-width="1.300"><path d="M.5 6.500l5-5 5 5"/></svg>
    <svg width="16" height="16" viewBox="0 0 16 16"><circle cx="8" cy="8" r="7.500" fill="#e5d31c"/><path d="M5 2h6v3h3v6h-3v3H5v-3H2V5h3z" fill="#3f9f35"/><path d="M8 4v8M4 8h8" stroke="#fff" stroke-width="2"/></svg>
    <svg width="16" height="16" viewBox="0 0 16 16" fill="none" stroke="#fff" stroke-width="1.200"><path d="M4 1.500h6M3 4h9v9H3zM5 15h5M12 6l3-1v6l-3-1"/><circle cx="7.500" cy="8.500" r="2"/></svg>
    <svg width="18" height="16" viewBox="0 0 18 16"><path d="M4 12C0 12 0 7 4 7c1-5 8-5 9-1 4 0 4 6 1 6z" fill="#d7dde4"/><circle cx="12" cy="11" r="4.500" fill="#1a78d0"/><path d="M10 11c1-2 3-2 4-.5M14 11.500c-1 2-3 2-4 .5" stroke="#fff" fill="none"/></svg>
    <svg width="16" height="10" viewBox="0 0 16 10" fill="none" stroke="#fff"><path d="M.5 1.500h13v7H.5zM14 4h1.500v2H14"/><path d="M2 3h7v4H2z" fill="#fff" stroke="none"/></svg>
    <svg width="16" height="14" viewBox="0 0 16 14" fill="none" stroke="#fff" stroke-width="1.100"><path d="M.5 5v4H3l4 3.500v-11L3 5zM9 5c1 1 1 3 0 4M11 3c2 2 2 6 0 8M13 1.500c3 3 3 8 0 11"/></svg>
    <time>3:27 PM<br>11/16/2024</time>
    <span class="note"><svg width="17" height="17" viewBox="0 0 17 17" fill="none" stroke="#fff" stroke-width="1.200"><path d="M1 1h15v11H8l-3 3v-3H1zM4 4.500h9M4 7h9M4 9.500h5"/></svg><b>2</b></span>
  </div>
</footer>
</body>
</html>
```
FILE: styles.css
```css
* { box-sizing: border-box; }
body {
  margin: 0;
  min-height: 100vh;
  display: flex;
  flex-direction: column;
  font-family: "Open Sans", "Noto Sans", sans-serif;
  font-size: 11px;
  color: #252423;
  background: #f3f2f1;
  overflow: hidden;
}
button, input { font: inherit; color: inherit; }
button { border: 0; background: none; padding: 0; }
h1, h2, h3, h4, p { margin: 0; }
svg { flex: none; display: block; overflow: visible; }
.bare { display: grid; place-items: center; }
input[type="search"] { border: 0; background: none; outline: 0; padding: 0; min-width: 0; flex: 1; appearance: none; }
input::placeholder { color: inherit; opacity: 1; }

/* Title bar */
.titlebar {
  display: grid;
  grid-template-columns: minmax(0, 668fr) 400px minmax(200px, 298fr);
  align-items: center;
  height: 34px;
  background: #3b3a39;
  color: #fff;
}
.title-left { display: flex; align-items: center; gap: 14px; padding-left: 17px; }
.doc-title { display: flex; align-items: center; gap: 6px; padding-top: 5px; margin-left: -5px; white-space: nowrap; font-size: 12px; }
.title-search {
  display: flex;
  align-items: center;
  gap: 10px;
  height: 24px;
  padding-left: 17px;
  border-radius: 2px;
  background: #d4d4d2;
  color: #2b6a5b;
  font-size: 13px;
}
.title-right { display: flex; justify-content: flex-end; height: 34px; }
.signin { display: flex; align-items: center; gap: 9px; margin-right: 15px; font-size: 12px; }
.win { width: 44px; display: grid; place-items: center; }

/* Ribbon tabs */
.tabs { display: flex; align-items: stretch; gap: 33px; height: 35px; padding: 0 6px 0 23px; background: #fafafa; font-size: 13px; }
.tab { height: 31px; padding-top: 4px; border-bottom: 3px solid transparent; }
.tab.file { margin-right: 4px; }
.tab.active { border-color: #007c67; font-weight: 600; }
.share {
  display: flex;
  align-items: center;
  gap: 7px;
  height: 24px;
  margin: 4px 0 0 auto;
  padding: 0 6px;
  border-radius: 4px;
  background: #007c67;
  color: #fff;
  font-size: 12px;
}

/* Ribbon */
.ribbon {
  position: relative;
  z-index: 2;
  display: flex;
  height: 91px;
  padding-top: 1px;
  background: #fafafa;
  box-shadow: 0 3px 3px -2px rgba(0, 0, 0, .3);
}
.group { display: flex; flex-direction: column; justify-content: space-between; border-right: 1px solid #d2d0ce; }
.tools { display: grid; justify-content: start; padding-top: 6px; }
.clip { width: 161px; }
.clip .tools { grid-template-columns: 45px 107px; padding-left: 6px; }
.data { width: 370px; }
.data .tools { grid-template-columns: 44px 54px 66px 36px 44px 52px 58px; padding-left: 6px; }
.queries { width: 117px; }
.queries .tools { grid-template-columns: 58px 42px; padding-left: 7px; }
.insert { width: 147px; }
.insert .tools { grid-template-columns: 40px 38px 52px; padding-left: 8px; }
.calc { width: 176px; }
.calc .tools { grid-template-columns: 60px 48px 52px; padding-left: 9px; }
.one .tools { justify-content: center; }
.sens { width: 74px; }
.shr { width: 59px; }
.cop { width: 60px; }
.gname { height: 14px; line-height: 14px; font-size: 9px; text-align: center; }
.tool { display: flex; flex-direction: column; align-items: center; justify-content: flex-start; white-space: nowrap; line-height: 16px; }
.tool span { margin-top: 2px; text-align: center; }
.ic { width: 32px; height: 32px; }
.cv { display: inline-block; width: 4px; height: 4px; margin: 0 1px 3px 4px; border: solid currentColor; border-width: 0 1px 1px 0; transform: rotate(45deg); }
.disabled, .off { color: #c3c1bf; }
.stack { display: grid; align-content: start; grid-auto-rows: 24px; margin-top: -6px; }
.mini { display: flex; align-items: center; gap: 3px; white-space: nowrap; }
.k { fill: none; stroke: #3b3a39; stroke-width: 1.2; }
.w { fill: #fafafa; }
.b { fill: #71bff0; stroke: #0063b1; stroke-width: 1; }
.g { fill: #c8c6c4; stroke: #797775; stroke-width: 1; }
.w2 { fill: #fafafa; }
.fx { font: italic 18px "Liberation Serif", serif; fill: #979593; stroke: none; }
.collapse { align-self: flex-end; margin: 0 5px 5px auto; }

/* Work area */
.work { flex: 1; display: flex; min-height: 0; }
.rail { width: 41px; border-right: 1px solid #d2d0ce; background: #f3f2f1; }
.rbtn { display: grid; place-items: center; width: 100%; height: 40px; border-left: 3px solid transparent; padding-right: 2px; }
.rbtn.on { border-color: #007c67; }
.dax { font: 600 7px "Open Sans", sans-serif; fill: #605e5c; stroke: none; }
.center { flex: 1; display: flex; flex-direction: column; min-width: 0; }
.stage { flex: 1; display: flex; min-height: 0; }
.canvas { flex: 1; min-width: 0; overflow: hidden; background: #666; }
.page { position: relative; width: 890px; height: 502px; margin: 0 auto; border: dotted #555; border-width: 0 1px 1px; }
.visual { position: absolute; background: #999; }
.visual h2 { height: 16px; padding-left: 4px; font: 400 12px/15px Roboto, sans-serif; color: #252423; }
.kpis { left: 0; top: 0; width: 194px; height: 146px; }
.kpi { height: 71px; text-align: center; color: #666; }
.kpi:first-child { border-bottom: 1px solid #8b8b8b; }
.kpi strong { display: block; height: 53px; padding-top: 15px; font: 400 36px/38px Roboto, sans-serif; color: #252423; }
.kpi + .kpi { padding-top: 2px; }
.kpi span { display: block; line-height: 18px; }
.banner { left: 209px; top: 0; width: 475px; height: 50px; padding: 3px 0 0 38px; text-align: center; }
.banner h1 { font-size: 22px; line-height: 32px; color: #00239c; }
.t1 { left: 7px; top: 201px; width: 195px; height: 181px; padding: 4px; }
.t1 p { height: 25px; font-size: 9px; }
.t2 { left: 220px; top: 201px; width: 155px; height: 144px; padding: 3px 4px; }
.t3 { left: 0; top: 382px; width: 357px; height: 118px; padding: 3px; }
.bars { left: 457px; top: 63px; width: 431px; height: 264px; }
.pie { left: 447px; top: 327px; width: 441px; height: 173px; border-top: 1px solid #909090; }
.pie h2 { height: 15px; line-height: 14px; }
.grid { border-collapse: collapse; font-size: 9px; line-height: 13px; white-space: nowrap; }
.t1 .grid { width: 140px; }
.t2 .grid { width: 109px; }
.t1 th:first-child, .t2 th:first-child { width: 37px; }
.grid th { height: 19px; padding: 1px 3px 0 4px; border-right: 1px solid #e1dfdd; border-bottom: 1px solid #3a9bf0; background: #fff; font-weight: 400; text-align: left; vertical-align: top; }
.grid td { height: 14px; padding: 0 3px 0 4px; border-right: 1px solid #e1dfdd; background: #fff; text-align: right; }
.grid td:first-child { text-align: left; }
.grid tbody tr:nth-child(even) td { background: #ececec; }
.grid tfoot td { border: 0; border-top: 1px solid #3a80c0; background: none; font-weight: 700; }
.sorted::after { content: ""; display: block; width: 0; height: 0; margin: -1px 0 1px 1px; border: solid transparent; border-top-color: #222; border-width: 3px 3px 0; }
.matrix { width: 341px; table-layout: fixed; }
.matrix .c0 { width: 36px; }
.matrix .c1 { width: 42px; }
.matrix td { height: 13px; padding-left: 2px; }
.matrix td:first-child { padding-left: 4px; border-right-color: #3a9bf0; }
.matrix td:last-child, .matrix th:last-child, .matrix .sum td { font-weight: 700; }
.ax { font-size: 8px; fill: #6c6c6c; }
.axt { font: 10px Roboto, sans-serif; fill: #252423; }
.leg { font-size: 9px; fill: #606060; }
.lt { font-weight: 600; }

.filters { width: 33px; display: flex; flex-direction: column; align-items: center; padding-top: 12px; background: #fff; }
.filters > svg { margin: 15px 0 6px; }
.filters h2 { writing-mode: vertical-rl; font-size: 14px; line-height: 16px; font-weight: 600; }

.pagebar { display: flex; height: 35px; padding-left: 6px; background: #f3f2f1; }
.device { display: grid; place-items: center; width: 30px; border-bottom: 4px solid transparent; margin-right: 15px; padding-bottom: 1px; }
.device.on { background: linear-gradient(#007c67, #007c67) 50% 100% / 24px 3px no-repeat; }
.arrow { width: 21px; }
.device + .arrow { margin-left: -10px; }
.arrow + .ptab { margin-left: -1px; }
.ptab { width: 77px; border-left: 1px solid #a19f9d; border-bottom: 4px solid #007c67; background: #fff; padding-top: 5px; font-size: 12px; }
.plus { display: grid; place-items: center; width: 39px; background: #007c67; }

/* Side panes */
.viz, .fields { width: 181px; border-left: 1px solid #e1dfdd; }
.phead { display: flex; justify-content: space-between; align-items: center; height: 38px; padding: 0 8px; }
.phead h2 { font-size: 15px; font-weight: 600; }
.viz h3 { height: 19px; padding-left: 8px; font-size: 11px; line-height: 16px; font-weight: 600; }
.modes { display: flex; gap: 34px; height: 36px; padding-left: 8px; }
.mode { display: grid; place-items: center; width: 32px; height: 32px; border-radius: 2px; }
.mode.on { background: #d2d0ce; }
.caret { margin: 0 0 -1px 15px; position: relative; }
.gallery { display: grid; grid-template-columns: repeat(6, 18px); align-content: start; gap: 10px; height: 207px; padding: 11px 0 0 11px; border-top: 1px solid #8a8886; }
.gallery svg { width: 18px; height: 18px; }
.n { font: 600 9px "Open Sans", sans-serif; fill: #1a86d0; }
.rp { font: 700 15px "Open Sans", sans-serif; fill: #1280b4; }
.wells { border-top: 1px solid #e1dfdd; padding: 8px 6px 0 4px; font-size: 11px; }
.wells h4 { padding-left: 8px; line-height: 18px; font-size: 11px; font-weight: 600; color: #484644; }
.wells h4.plain { font-weight: 400; color: #252423; }
.drop { margin: 4px 0 10px; height: 28px; padding-left: 10px; line-height: 27px; border: 1px dashed #c8c6c4; border-radius: 2px; background: #fff; white-space: nowrap; }
.drop.low { padding-left: 8px; height: 27px; margin-top: 5px; line-height: 25px; }
.sw { display: flex; align-items: center; justify-content: space-between; height: 27px; padding: 0 16px 0 8px; }
.wells h4 + .sw { margin-top: 2px; }
.tg { display: flex; align-items: center; gap: 2px; width: 32px; height: 16px; padding: 0 4px; border: 1px solid #797775; border-radius: 8px; background: #fff; }
.tg input { appearance: none; flex: none; width: 8px; height: 8px; margin: 0; border-radius: 50%; background: #605e5c; }
.tg b { font-size: 9px; line-height: 12px; font-weight: 400; color: #605e5c; }
.tg.yes { flex-direction: row-reverse; background: #007c67; border-color: #007c67; }
.tg.yes input { background: #fff; }
.tg.yes b { color: #fff; }
.fsearch { display: flex; align-items: center; gap: 6px; height: 24px; margin: 7px 4px 11px; padding: 0 12px; border: 1px solid #d2d0ce; border-bottom-color: #605e5c; border-radius: 4px; background: #fff; color: #605e5c; font-size: 13px; }
.set { display: flex; align-items: center; gap: 6px; height: 20px; padding-left: 15px; }

/* Status bar */
.status { display: flex; align-items: center; justify-content: space-between; height: 24px; padding: 2px 18px 0 4px; border-top: 1px solid #e1dfdd; border-bottom: 1px solid #111; color: #484644; font-size: 12px; }
.zoom { display: flex; align-items: center; gap: 7px; }
.zoom .pct { margin: 0 11px 0 5px; }
.zoom > .bare { font-size: 13px; }
.zoom input { appearance: none; width: 100px; height: 11px; margin: 0; background: linear-gradient(#605e5c, #605e5c) 50% 50% / 100% 1px no-repeat, linear-gradient(#605e5c, #605e5c) 50% 50% / 1px 5px no-repeat; }
.zoom input::-webkit-slider-thumb { appearance: none; width: 4px; height: 11px; background: #605e5c; }

/* Taskbar */
.taskbar { display: flex; height: 41px; background: linear-gradient(90deg, #2b363a, #3b2c26 28%, #3b2c26 46%, #2c2b2c 75%, #22282d); color: #fff; }
.start { display: grid; place-items: center; width: 48px; }
.wsearch { display: flex; align-items: center; gap: 11px; width: 288px; padding: 0 2px 0 11px; border: 1px solid #c8c6c4; background: #f2f2f2; color: #333; font-size: 14px; }
.app { display: grid; place-items: center; width: 49px; border-bottom: 3px solid transparent; }
.app.run { background: linear-gradient(#76b9ed, #76b9ed) 50% 100% / 40px 3px no-repeat border-box; }
.app.hot { width: 48px; background: linear-gradient(#76b9ed, #76b9ed) 50% 100% / 48px 3px no-repeat border-box, #5d524e; }
.tray { display: flex; align-items: center; gap: 8px; margin-left: auto; padding-right: 17px; }
.res { margin-right: 19px; font-size: 13px; }
.tray time { width: 62px; margin: 0 6px 0 -3px; text-align: center; line-height: 18px; }
.note { position: relative; margin-left: 6px; }
.note b { position: absolute; left: 9px; top: 7px; width: 14px; height: 14px; border-radius: 50%; background: #e8e8e8; color: #222; font-size: 9px; line-height: 14px; text-align: center; }
```
